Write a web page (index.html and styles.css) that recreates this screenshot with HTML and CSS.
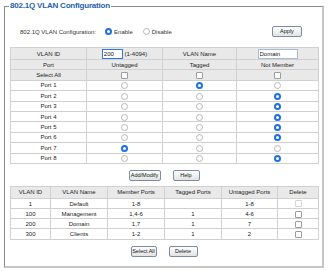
FILE: index.html
```html
<!DOCTYPE html>
<html>
<head>
<meta charset="utf-8">
<link rel="stylesheet" href="styles.css">
</head>
<body>
<fieldset class="panel">
  <legend class="title">802.1Q VLAN Configuration</legend>
  <div class="mode">
    <span class="mode-label">802.1Q VLAN Configuration:</span>
    <span class="opt"><span class="radio on"></span>Enable</span>
    <span class="opt"><span class="radio"></span>Disable</span>
    <button class="btn btn-apply">Apply</button>
  </div>

  <table class="grid ports">
    <colgroup><col class="c1"><col class="c2"><col class="c3"><col class="c4"></colgroup>
    <tr class="head first">
      <td>VLAN ID</td>
      <td><input class="vid" value="200"> (1-4094)</td>
      <td>VLAN Name</td>
      <td><input class="vname" value="Domain"></td>
    </tr>
    <tr class="head"><td>Port</td><td>Untagged</td><td>Tagged</td><td>Not Member</td></tr>
    <tr class="head"><td>Select All</td><td><span class="check"></span></td><td><span class="check"></span></td><td><span class="check"></span></td></tr>
    <tr><td>Port 1</td><td><span class="radio"></span></td><td><span class="radio on"></span></td><td><span class="radio"></span></td></tr>
    <tr><td>Port 2</td><td><span class="radio"></span></td><td><span class="radio"></span></td><td><span class="radio on"></span></td></tr>
    <tr><td>Port 3</td><td><span class="radio"></span></td><td><span class="radio"></span></td><td><span class="radio on"></span></td></tr>
    <tr><td>Port 4</td><td><span class="radio"></span></td><td><span class="radio"></span></td><td><span class="radio on"></span></td></tr>
    <tr><td>Port 5</td><td><span class="radio"></span></td><td><span class="radio"></span></td><td><span class="radio on"></span></td></tr>
    <tr><td>Port 6</td><td><span class="radio"></span></td><td><span class="radio"></span></td><td><span class="radio on"></span></td></tr>
    <tr><td>Port 7</td><td><span class="radio on"></span></td><td><span class="radio"></span></td><td><span class="radio"></span></td></tr>
    <tr><td>Port 8</td><td><span class="radio"></span></td><td><span class="radio"></span></td><td><span class="radio on"></span></td></tr>
  </table>

  <div class="actions">
    <button class="btn btn-add">Add/Modify</button>
    <button class="btn btn-help">Help</button>
  </div>

  <table class="grid list">
    <colgroup><col class="l1"><col class="l2"><col class="l3"><col class="l4"><col class="l5"><col class="l6"></colgroup>
    <tr class="head first"><td>VLAN ID</td><td>VLAN Name</td><td>Member Ports</td><td>Tagged Ports</td><td>Untagged Ports</td><td>Delete</td></tr>
    <tr><td>1</td><td>Default</td><td>1-8</td><td></td><td>1-8</td><td><span class="check off"></span></td></tr>
    <tr><td>100</td><td>Management</td><td>1,4-6</td><td>1</td><td>4-6</td><td><span class="check"></span></td></tr>
    <tr><td>200</td><td>Domain</td><td>1,7</td><td>1</td><td>7</td><td><span class="check"></span></td></tr>
    <tr><td>300</td><td>Clients</td><td>1-2</td><td>1</td><td>2</td><td><span class="check"></span></td></tr>
  </table>

  <div class="actions actions-bottom">
    <button class="btn btn-selall">Select All</button>
    <button class="btn btn-del">Delete</button>
  </div>
</fieldset>
</body>
</html>
```
FILE: styles.css
```css
* { box-sizing: border-box; }

body {
  margin: 0;
  background: #fff;
  color: #222;
  font-family: "Liberation Sans", Arial, sans-serif;
}

.panel {
  margin: 0 0 0 4px;
  width: 320px;
  min-width: 0;
  padding: 0 4px 9px 5px;
  border: 1px solid #8a8a8a;
  border-right: 2px solid #c6c6c6;
  border-bottom: 2px solid #c6c6c6;
}

.title {
  margin-left: -1px;
  padding: 0 1px;
  font-family: "Liberation Sans", Arial, sans-serif;
  font-weight: bold;
  font-size: 8px;
  letter-spacing: -0.2px;
  line-height: 12px;
  color: #1f5fae;
}

.mode {
  display: flex;
  align-items: center;
  height: 11px;
  margin-top: 14px;
  padding-left: 10px;
  font-size: 6px;
  color: #333;
}

.mode-label { margin-right: 9px; }

.opt {
  display: inline-flex;
  align-items: center;
  margin-right: 10px;
}

.opt .radio { margin-right: 2px; }

.radio {
  display: inline-block;
  width: 7px;
  height: 7px;
  border-radius: 50%;
  border: 1px solid #b8b8b8;
  background: #fff;
  vertical-align: middle;
}

.radio.on { border: 2px solid #1f6fe5; }

.check {
  display: inline-block;
  width: 7px;
  height: 7px;
  border: 1px solid #9c9c9c;
  border-radius: 1px;
  background: #fff;
  vertical-align: middle;
}

.check.off { border-color: #d4d4d4; }

.btn {
  height: 11px;
  padding: 0;
  border: 1px solid #7d8ca3;
  border-radius: 2px;
  background: linear-gradient(#ffffff, #e2e2e2);
  color: #111;
  font-family: "Liberation Sans", Arial, sans-serif;
  font-size: 5.5px;
  line-height: 9px;
  white-space: nowrap;
}

.btn-apply { width: 30px; margin-left: auto; margin-right: 16px; }
.btn-add { width: 32px; }
.btn-help { width: 27px; }
.btn-selall { width: 26px; }
.btn-del { width: 29px; }

.grid {
  width: 308px;
  border-collapse: collapse;
  table-layout: fixed;
  font-size: 6px;
  color: #222;
}

.grid td {
  height: 10.4px;
  padding: 0;
  border: 1px solid #d0d0d0;
  text-align: center;
  line-height: 8px;
  white-space: nowrap;
}

.grid .head td { background: #e9e9e9; }
.grid .first td { height: 12px; }

.ports { margin-top: 10px; }
.c1 { width: 76px; }
.c2 { width: 76px; }
.c3 { width: 74px; }
.c4 { width: 82px; }

.list { margin-top: 5px; }
.list td { height: 10.2px; }
.l1 { width: 40px; }
.l2 { width: 57px; }
.l3 { width: 57px; }
.l4 { width: 57px; }
.l5 { width: 56px; }
.l6 { width: 41px; }

.vid, .vname {
  height: 10px;
  padding: 0 1px;
  font-family: "Liberation Sans", Arial, sans-serif;
  font-size: 6px;
  color: #111;
  background: #fff;
  outline: none;
  vertical-align: middle;
}

.vid { width: 21px; border: 1px solid #2f74e0; }
.vname { width: 40px; border: 1px solid #a9b9cf; }

.actions {
  display: flex;
  justify-content: center;
  gap: 12px;
  margin-top: 6px;
}

.actions-bottom { margin-top: 6px; }
```
